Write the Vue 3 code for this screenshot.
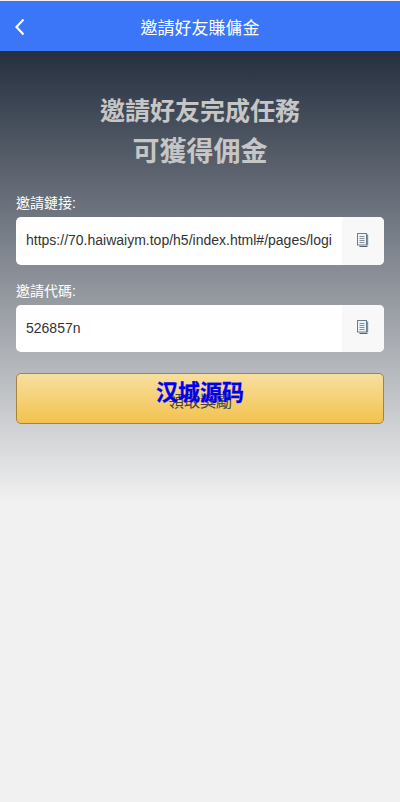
<script setup>
const fields = [
  { label: '邀請鏈接:', value: 'https://70.haiwaiym.top/h5/index.html#/pages/login/register?code=526857n' },
  { label: '邀請代碼:', value: '526857n' }
]
</script>

<template>
  <div class="page">
    <header class="bar">
      <svg class="back" width="12" height="18" viewBox="0 0 12 18" fill="none">
        <path d="M9.5 1.5 L2.5 9 L9.5 16.5" stroke="#fff" stroke-width="2.2" />
      </svg>
      <span class="bar-title">邀請好友賺傭金</span>
    </header>
    <main class="hero">
      <h1 class="headline">邀請好友完成任務<br /><span class="headline-2">可獲得佣金</span></h1>
      <section v-for="f in fields" :key="f.label" class="field">
        <div class="label">{{ f.label }}</div>
        <div class="box">
          <div class="value">{{ f.value }}</div>
          <div class="copy">
            <svg class="copy-icon" width="12" height="14" viewBox="0 0 12 14" fill="none">
              <path d="M2.5 13.5 H10.5" stroke="#5b6066" stroke-width="1" />
              <path d="M10.5 1.5 V12.5" stroke="#4a9ee0" stroke-width="1.4" />
              <rect x="0.5" y="0.5" width="9" height="11.5" fill="#eef3f7" stroke="#6a7d90" stroke-width="1" />
              <path d="M2.5 3.5 H7.5 M2.5 5.5 H7.5 M2.5 7.5 H7.5 M2.5 9.5 H7.5" stroke="#8a8f96" stroke-width="1" />
            </svg>
          </div>
        </div>
      </section>
      <button class="claim">
        <span class="claim-text">領取獎勵</span>
        <span class="stamp">汉城源码</span>
      </button>
    </main>
  </div>
</template>

<style scoped>
.page {
  width: 400px;
  min-height: 802px;
  padding-top: 1px;
  box-sizing: border-box;
  background: #f1f1f1;
  font-family: "Liberation Sans", "Noto Sans CJK TC", sans-serif;
}
.bar {
  position: relative;
  height: 50px;
  background: #3b76f8;
  display: flex;
  align-items: center;
  justify-content: center;
}
.back {
  position: absolute;
  left: 14px;
  top: 17px;
}
.bar-title {
  color: #fff;
  font-size: 17px;
}
.hero {
  height: 451px;
  padding: 38px 16px 0;
  box-sizing: border-box;
  background: linear-gradient(180deg, #252f3f 0%, #f1f1f1 100%);
}
.headline {
  margin: 2px 0 20px;
  text-align: center;
  color: #c6c6c6;
  font-size: 25px;
  line-height: 41px;
  font-weight: 700;
}
.headline-2 {
  font-size: 27px;
}
.field {
  margin-bottom: 16px;
}
.label {
  color: #fff;
  font-size: 14px;
  line-height: 20px;
  margin-bottom: 4px;
}
.box {
  display: flex;
  height: 47.6px;
  border-radius: 5px;
  background: #fff;
  overflow: hidden;
}
.value {
  flex: 1;
  min-width: 0;
  margin: 0 10px;
  line-height: 47.6px;
  color: #333;
  font-size: 14px;
  white-space: nowrap;
  overflow: hidden;
}
.copy {
  width: 42px;
  background: #f8f8f8;
  display: flex;
  align-items: center;
  justify-content: center;
  padding-bottom: 2px;
  box-sizing: border-box;
}
.claim {
  position: relative;
  display: block;
  width: 100%;
  height: 51px;
  margin-top: 21px;
  padding: 2px 0 0;
  border: 1px solid #a5853c;
  border-radius: 5px;
  background: linear-gradient(180deg, #f8dfa0 0%, #f2c24e 100%);
  color: #444;
  font-family: inherit;
  font-size: 16px;
}
.stamp {
  position: absolute;
  left: 0;
  right: 0;
  top: 5px;
  color: #0000f0;
  font-size: 22px;
  line-height: 28px;
  font-weight: 700;
  -webkit-text-stroke: 0.3px #0000f0;
}
</style>
